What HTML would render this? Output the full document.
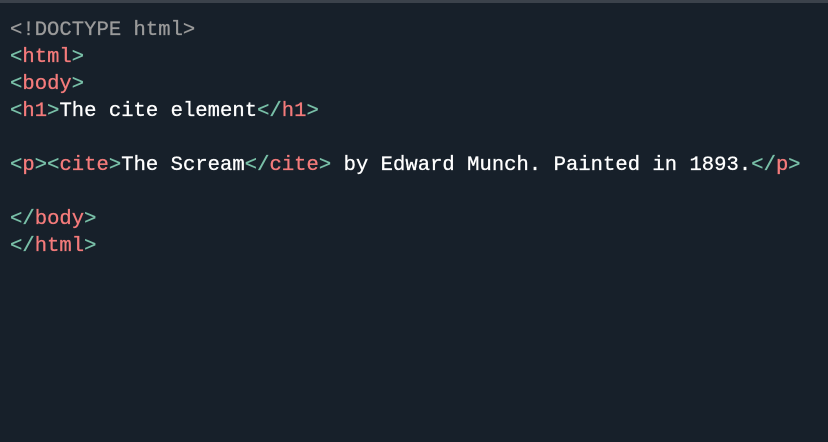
<!DOCTYPE html>
<html><head><style>
body{margin:0;width:828px;height:442px;background:#17202a;overflow:hidden;}
.bar{height:3px;background:#3b424b;}
pre{margin:0;position:absolute;left:10px;top:17px;font-family:"Liberation Mono",monospace;font-size:20.5px;letter-spacing:0.05px;line-height:27px;color:#ffffff;-webkit-text-stroke:0.3px currentColor;}
.d{color:#9a9a9a}.b{color:#79c0a8}.t{color:#f47b7b}
</style></head><body><div class="bar"></div>
<pre><span class="d">&lt;!DOCTYPE html&gt;</span>
<span class="b">&lt;</span><span class="t">html</span><span class="b">&gt;</span>
<span class="b">&lt;</span><span class="t">body</span><span class="b">&gt;</span>
<span class="b">&lt;</span><span class="t">h1</span><span class="b">&gt;</span>The cite element<span class="b">&lt;/</span><span class="t">h1</span><span class="b">&gt;</span>

<span class="b">&lt;</span><span class="t">p</span><span class="b">&gt;&lt;</span><span class="t">cite</span><span class="b">&gt;</span>The Scream<span class="b">&lt;/</span><span class="t">cite</span><span class="b">&gt;</span> by Edward Munch. Painted in 1893.<span class="b">&lt;/</span><span class="t">p</span><span class="b">&gt;</span>

<span class="b">&lt;/</span><span class="t">body</span><span class="b">&gt;</span>
<span class="b">&lt;/</span><span class="t">html</span><span class="b">&gt;</span></pre>
</body></html>
